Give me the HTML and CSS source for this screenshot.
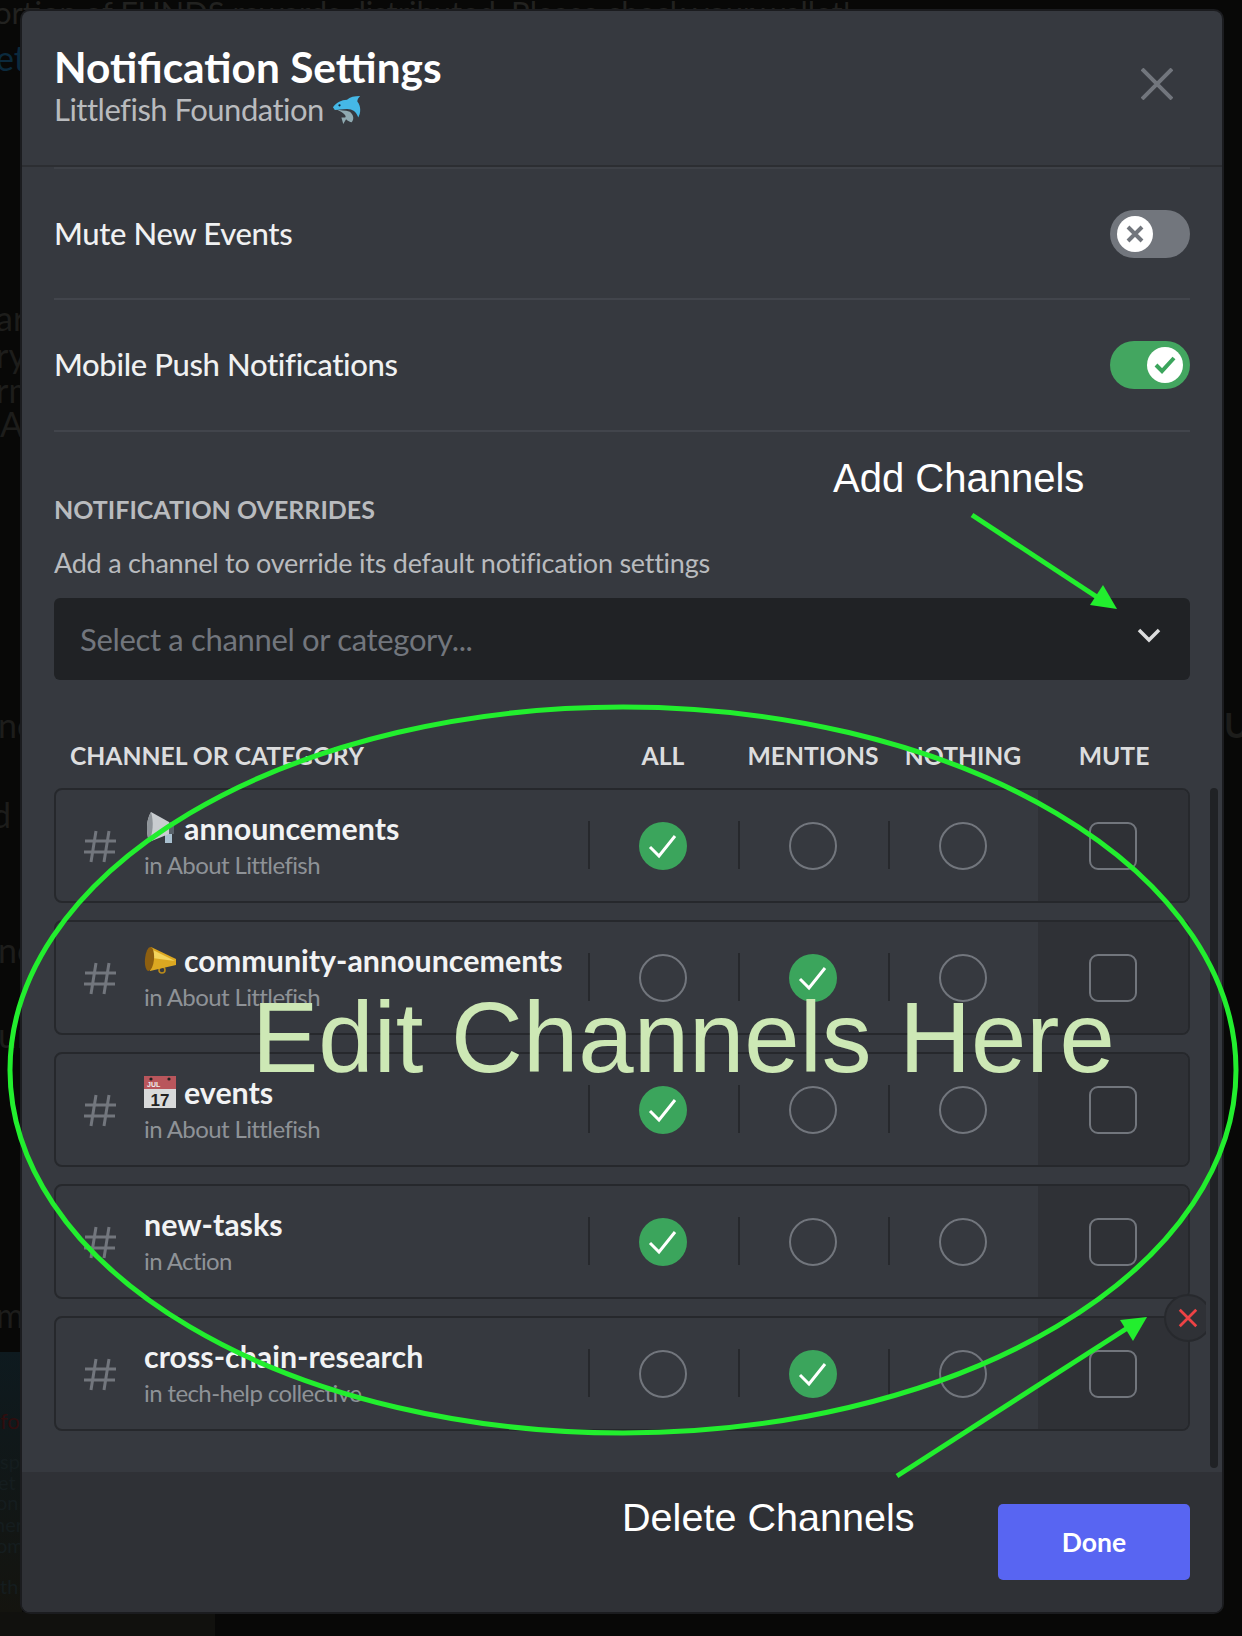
FILE: index.html
```html
<!DOCTYPE html>
<html lang="en">
<head>
  <meta charset="UTF-8">
  <title>Notification Settings</title>
  <link rel="stylesheet" href="styles.css">
</head>
<body>
  <!-- dimmed page behind the modal -->
  <div class="backdrop">
    <div class="bd-photo"></div>
    <div class="bd-foot"></div>
    <span class="ghost g-top">ortion of FUNDS rewards distributed. Please check your wallet!</span>
    <span class="ghost g-blue">et</span>
    <span class="ghost g1">ar</span>
    <span class="ghost g2">ry</span>
    <span class="ghost g3">rm</span>
    <span class="ghost g4">A</span>
    <span class="ghost g5">no</span>
    <span class="ghost g6">d t</span>
    <span class="ghost g7">nc</span>
    <span class="ghost g8">ur</span>
    <span class="ghost g9">m</span>
    <span class="ghost g10">for</span>
    <span class="ghost small g12">sp</span>
    <span class="ghost small g13">et</span>
    <span class="ghost small g14">on</span>
    <span class="ghost small g15">her</span>
    <span class="ghost small g16">om</span>
    <span class="ghost small g17">th</span>
    <span class="ghost g11">UT</span>
  </div>

  <div class="modal">
    <header class="modal-head">
      <div>
        <h1 class="title">Notification Settings</h1>
        <div class="subtitle">Littlefish Foundation
          <svg class="dolphin" viewBox="0 0 32 32">
            <path d="M4 16c5 2 10 1 15 3 4 3 5 8 2 11-2 0-4-1-6-3l-3 5-2-7 4 0c2-1-1-5-10-9z" fill="#8fa9b0"/>
            <path d="M1 14C5 9 10 6 16 6 19 3 24 2 30 2 28 4 27 6 27 8 31 13 31 20 28 25 26 19 22 16 16 16 11 16 6 17 3 17z" fill="#45b8e6"/>
            <circle cx="8" cy="12" r="1.2" fill="#123"/>
          </svg>
        </div>
      </div>
      <svg class="close" viewBox="0 0 32 32"><path d="M1 1l30 30M31 1L1 31"/></svg>
    </header>

    <div class="modal-body">
      <div class="settings">
        <div class="setting">
          <span>Mute New Events</span>
          <div class="toggle">
            <div class="knob">
              <svg viewBox="0 0 36 36"><path class="x-mark" d="M11 11l14 14M25 11L11 25"/></svg>
            </div>
          </div>
        </div>
        <div class="setting">
          <span>Mobile Push Notifications</span>
          <div class="toggle on">
            <div class="knob">
              <svg viewBox="0 0 36 36"><path class="tick-mark" d="M9 18l6 6 12-13"/></svg>
            </div>
          </div>
        </div>
      </div>

      <div class="overrides">
        <h2 class="section-title">NOTIFICATION OVERRIDES</h2>
        <p class="section-desc">Add a channel to override its default notification settings</p>
        <div class="select">
          <span>Select a channel or category...</span>
          <svg viewBox="0 0 24 24"><path d="M2 6l10 10L22 6"/></svg>
        </div>
      </div>

      <div class="table-head">
        <span class="col-name">CHANNEL OR CATEGORY</span>
        <span>ALL</span>
        <span>MENTIONS</span>
        <span>NOTHING</span>
        <span>MUTE</span>
      </div>

      <div class="list-wrap">
        <div class="list">
          <div class="row">
            <svg class="hash" viewBox="0 0 33 33"><path d="M12 1L7 32M25 1L20 32M1 11h31M0 22h31"/></svg>
            <div class="channel">
              <div class="name">
                <svg class="emoji" viewBox="0 0 32 32">
                  <path d="M21 20h7v11h-7z" fill="#a9c0cf"/>
                  <path d="M24 10h6v12h-6z" fill="#59626a"/>
                  <path d="M7 0C2 8 2 20 5 30l20-8V10z" fill="#c9cdd0"/>
                  <path d="M7 0C2 8 2 20 5 30c4-9 5-20 2-30z" fill="#8e9499"/>
                </svg>
                announcements
              </div>
              <div class="sub">in About Littlefish</div>
            </div>
            <div class="opt"><span class="radio sel"><svg viewBox="0 0 48 48"><path d="M11 25l9 9 16-20"/></svg></span></div>
            <div class="opt"><span class="radio"></span></div>
            <div class="opt"><span class="radio"></span></div>
            <div class="opt mute"><span class="box"></span></div>
          </div>

          <div class="row">
            <svg class="hash" viewBox="0 0 33 33"><path d="M12 1L7 32M25 1L20 32M1 11h31M0 22h31"/></svg>
            <div class="channel">
              <div class="name">
                <svg class="emoji" viewBox="0 0 32 32">
                  <circle cx="18" cy="26" r="3" fill="none" stroke="#b98a1a" stroke-width="1.6"/>
                  <path d="M7 3l25 12v6L6 27z" fill="#dca821"/>
                  <path d="M9 6l22 11-23-3z" fill="#f3d45c"/>
                  <ellipse cx="5.5" cy="15" rx="4.5" ry="12" transform="rotate(5 5 15)" fill="#8d5f10"/>
                </svg>
                community-announcements
              </div>
              <div class="sub">in About Littlefish</div>
            </div>
            <div class="opt"><span class="radio"></span></div>
            <div class="opt"><span class="radio sel"><svg viewBox="0 0 48 48"><path d="M11 25l9 9 16-20"/></svg></span></div>
            <div class="opt"><span class="radio"></span></div>
            <div class="opt mute"><span class="box"></span></div>
          </div>

          <div class="row">
            <svg class="hash" viewBox="0 0 33 33"><path d="M12 1L7 32M25 1L20 32M1 11h31M0 22h31"/></svg>
            <div class="channel">
              <div class="name">
                <svg class="emoji" viewBox="0 0 32 32">
                  <rect width="32" height="32" fill="#d9dadb"/>
                  <rect width="32" height="13" fill="#b9565c"/>
                  <circle cx="7" cy="3" r="1.6" fill="#222"/>
                  <circle cx="25" cy="3" r="1.6" fill="#222"/>
                  <text x="3" y="11" class="cal-month">JUL</text>
                  <text x="16" y="30" text-anchor="middle" class="cal-day">17</text>
                </svg>
                events
              </div>
              <div class="sub">in About Littlefish</div>
            </div>
            <div class="opt"><span class="radio sel"><svg viewBox="0 0 48 48"><path d="M11 25l9 9 16-20"/></svg></span></div>
            <div class="opt"><span class="radio"></span></div>
            <div class="opt"><span class="radio"></span></div>
            <div class="opt mute"><span class="box"></span></div>
          </div>

          <div class="row">
            <svg class="hash" viewBox="0 0 33 33"><path d="M12 1L7 32M25 1L20 32M1 11h31M0 22h31"/></svg>
            <div class="channel">
              <div class="name">new-tasks</div>
              <div class="sub">in Action</div>
            </div>
            <div class="opt"><span class="radio sel"><svg viewBox="0 0 48 48"><path d="M11 25l9 9 16-20"/></svg></span></div>
            <div class="opt"><span class="radio"></span></div>
            <div class="opt"><span class="radio"></span></div>
            <div class="opt mute"><span class="box"></span></div>
          </div>

          <div class="row">
            <svg class="hash" viewBox="0 0 33 33"><path d="M12 1L7 32M25 1L20 32M1 11h31M0 22h31"/></svg>
            <div class="channel">
              <div class="name">cross-chain-research</div>
              <div class="sub">in tech-help collective</div>
            </div>
            <div class="opt"><span class="radio"></span></div>
            <div class="opt"><span class="radio sel"><svg viewBox="0 0 48 48"><path d="M11 25l9 9 16-20"/></svg></span></div>
            <div class="opt"><span class="radio"></span></div>
            <div class="opt mute"><span class="box"></span></div>
            <div class="delete"><svg viewBox="0 0 24 24"><path d="M3 3l18 18M21 3L3 21"/></svg></div>
          </div>
        </div>
        <div class="scrollbar"></div>
      </div>
    </div>

    <footer class="modal-foot">
      <button class="done">Done</button>
    </footer>
  </div>

  <!-- hand drawn notes on top of the screenshot -->
  <svg class="marks" viewBox="0 0 1242 1636">
    <ellipse cx="623" cy="1070" rx="613" ry="363"/>
    <path d="M972 515l128 84"/>
    <path class="head" d="M1117 609l-27-4 13-20z"/>
    <path d="M897 1476l232-149"/>
    <path class="head" d="M1147 1317l-27 3 13 21z"/>
  </svg>
  <div class="note note-add">Add Channels</div>
  <div class="note note-del">Delete Channels</div>
  <div class="note note-edit">Edit Channels Here</div>
</body>
</html>
```

FILE: styles.css
```css
* {
  box-sizing: border-box;
}
body {
  margin: 0;
  width: 1242px;
  height: 1636px;
  position: relative;
  overflow: hidden;
  background-color: #080807;
  font-family: Lato, "Open Sans", sans-serif;
  color: #dcddde;
}

/* page behind the modal */
.backdrop {
  position: absolute;
  inset: 0;
  overflow: hidden;
}
.bd-photo {
  position: absolute;
  left: 0;
  top: 1352px;
  width: 22px;
  height: 260px;
  background: linear-gradient(#0e1a1f, #14140f);
}
.bd-foot {
  position: absolute;
  left: 0;
  top: 1612px;
  width: 215px;
  height: 24px;
  background: #11110e;
}
.ghost {
  position: absolute;
  font-size: 34px;
  line-height: 30px;
  white-space: nowrap;
  color: #1d1d1b;
}
.ghost.small {
  font-size: 20px;
  line-height: 18px;
  color: #151d1f;
}
.g-top { left: -6px; top: -3px; font-size: 31px; color: #222220; }
.g-blue { left: -4px; top: 43px; color: #0b2a3d; }
.g1 { left: -4px; top: 303px; }
.g2 { left: -4px; top: 340px; }
.g3 { left: -4px; top: 375px; }
.g4 { left: 0; top: 409px; }
.g5 { left: -2px; top: 710px; }
.g6 { left: -8px; top: 800px; }
.g7 { left: -2px; top: 935px; }
.g8 { left: -2px; top: 1020px; }
.g9 { left: -4px; top: 1300px; }
.g10 { left: 0; top: 1408px; font-size: 22px; line-height: 26px; color: #300d0e; }
.g11 { left: 1224px; top: 710px; font-weight: 700; }
.g12 { left: 0; top: 1452px; }
.g13 { left: -2px; top: 1473px; }
.g14 { left: -4px; top: 1493px; }
.g15 { left: -6px; top: 1515px; }
.g16 { left: -4px; top: 1536px; }
.g17 { left: 0; top: 1577px; }

/* modal */
.modal {
  position: absolute;
  left: 22px;
  top: 11px;
  width: 1200px;
  height: 1601px;
  display: flex;
  flex-direction: column;
  background-color: #36393f;
  border-radius: 8px;
  box-shadow: 0 0 0 2px #1b1c1f;
}
.modal-head {
  height: 156px;
  flex: none;
  display: flex;
  justify-content: space-between;
  padding: 33px 49px 0 32px;
  border-bottom: 2px solid #2c2e32;
}
.title {
  margin: 0;
  font-size: 42.4px;
  line-height: 46px;
  font-weight: 700;
  color: #fff;
}
.subtitle {
  display: flex;
  align-items: center;
  gap: 8px;
  font-size: 31px;
  line-height: 38px;
  letter-spacing: -0.5px;
  color: #b9bbbe;
}
.dolphin {
  width: 30px;
  height: 30px;
}
.close {
  width: 32px;
  height: 32px;
  margin-top: 24px;
}
.close path {
  fill: none;
  stroke: #72767d;
  stroke-width: 4;
}

.modal-body {
  flex: 1;
  padding: 0 4px 0 32px;
}
.settings {
  margin-right: 28px;
  border-top: 2px solid #3e4147;
}
.setting {
  height: 132px;
  display: flex;
  align-items: center;
  justify-content: space-between;
  border-bottom: 2px solid #42454c;
  font-size: 31px;
  font-weight: 500;
  letter-spacing: -0.35px;
  color: #f0f1f2;
}
.setting span {
  margin-top: -2px;
}
.setting:first-child {
  height: 131px;
}
.toggle {
  width: 80px;
  height: 48px;
  padding: 6px 7px;
  border-radius: 24px;
  background-color: #72767d;
}
.toggle.on {
  display: flex;
  justify-content: flex-end;
  background-color: #43a660;
}
.knob {
  width: 36px;
  height: 36px;
  border-radius: 50%;
  background-color: #fff;
}
.knob svg {
  display: block;
}
.knob path {
  fill: none;
  stroke-width: 4;
}
.x-mark {
  stroke: #72767d;
}
.tick-mark {
  stroke: #3ba55c;
}

.overrides {
  margin-right: 28px;
  padding-top: 61px;
}
.section-title {
  margin: 0;
  font-size: 25px;
  line-height: 32px;
  font-weight: 700;
  color: #b9bbbe;
}
.section-desc {
  margin: 22px 0 0;
  font-size: 27px;
  line-height: 32px;
  letter-spacing: -0.25px;
  color: #b9bbbe;
}
.select {
  height: 82px;
  margin-top: 19px;
  padding: 0 29px 0 26px;
  display: flex;
  align-items: center;
  justify-content: space-between;
  background-color: #202225;
  border-radius: 6px;
  font-size: 31px;
  letter-spacing: -0.33px;
  color: #72767d;
}
.select svg {
  width: 24px;
  height: 24px;
  margin-top: -6px;
}
.select path {
  fill: none;
  stroke: #dcddde;
  stroke-width: 3.5;
}

.table-head {
  height: 108px;
  padding-top: 42px;
  margin-right: 28px;
  display: grid;
  grid-template-columns: 1fr 150px 150px 150px 152px;
  align-items: center;
  text-align: center;
  font-size: 24.7px;
  font-weight: 700;
  color: #dcddde;
}
.col-name {
  padding-left: 16px;
  text-align: left;
}

.list-wrap {
  display: flex;
  gap: 4px;
  height: 680px;
}
.list {
  width: 1152px;
  padding-right: 16px;
  overflow: hidden;
  display: flex;
  flex-direction: column;
  gap: 17px;
}
.scrollbar {
  width: 8px;
  background-color: #202225;
  border-radius: 4px;
}
.row {
  position: relative;
  height: 115px;
  flex: none;
  display: grid;
  grid-template-columns: 88px 1fr 150px 150px 150px 150px;
  align-items: stretch;
  border: 2px solid #26282c;
  border-radius: 8px;
}
.hash {
  width: 33px;
  height: 33px;
  margin: 40px 0 0 28px;
}
.hash path {
  fill: none;
  stroke: #72767d;
  stroke-width: 3;
}
.channel {
  padding-top: 17px;
  min-width: 0;
}
.name {
  display: flex;
  align-items: center;
  gap: 8px;
  height: 42px;
  font-size: 30.4px;
  font-weight: 700;
  color: #f2f3f4;
  white-space: nowrap;
}
.emoji {
  width: 32px;
  height: 32px;
  flex: none;
  margin-top: -1px;
}
.cal-month {
  font-size: 7px;
  fill: #eee;
  font-family: "Liberation Sans", sans-serif;
}
.cal-day {
  font-size: 17px;
  fill: #222;
  font-family: "Liberation Sans", sans-serif;
}
.sub {
  margin-top: 1px;
  font-size: 24px;
  line-height: 30px;
  letter-spacing: -0.6px;
  color: #8e9297;
  white-space: nowrap;
}
.opt {
  position: relative;
  display: flex;
  align-items: center;
  justify-content: center;
}
.opt::before {
  content: "";
  position: absolute;
  left: 0;
  top: 31px;
  width: 2px;
  height: 48px;
  background-color: #26282c;
}
.opt.mute {
  background-color: #2f3136;
  border-radius: 0 6px 6px 0;
}
.opt.mute::before {
  display: none;
}
.radio {
  width: 48px;
  height: 48px;
  border: 2px solid #72767d;
  border-radius: 50%;
}
.radio.sel {
  border: 0;
  background-color: #3ba55c;
}
.radio svg {
  display: block;
}
.radio path {
  fill: none;
  stroke: #fff;
  stroke-width: 3;
}
.box {
  width: 48px;
  height: 48px;
  border: 2px solid #72767d;
  border-radius: 9px;
}
.delete {
  position: absolute;
  right: -24px;
  top: -24px;
  width: 48px;
  height: 48px;
  display: flex;
  align-items: center;
  justify-content: center;
  background-color: #2f3136;
  border: 2px solid #27292d;
  border-radius: 50%;
}
.delete svg {
  width: 22px;
  height: 22px;
}
.delete path {
  fill: none;
  stroke: #ed4245;
  stroke-width: 3;
}

.modal-foot {
  height: 140px;
  flex: none;
  padding: 32px 32px 0 0;
  display: flex;
  justify-content: flex-end;
  align-items: flex-start;
  background-color: #2f3136;
  border-radius: 0 0 8px 8px;
}
.done {
  width: 192px;
  height: 76px;
  border: 0;
  border-radius: 5px;
  background-color: #5865f2;
  color: #fff;
  font-family: Lato, "Open Sans", sans-serif;
  font-size: 26.5px;
  font-weight: 700;
}

/* annotations */
.marks {
  position: absolute;
  left: 0;
  top: 0;
  width: 1242px;
  height: 1636px;
  pointer-events: none;
}
.marks ellipse,
.marks path {
  fill: none;
  stroke: #22ee2e;
  stroke-width: 5;
}
.marks path.head {
  fill: #22ee2e;
  stroke: none;
}
.note {
  position: absolute;
  font-family: "Liberation Sans", Arial, sans-serif;
  color: #fff;
  white-space: nowrap;
}
.note-add {
  left: 833px;
  top: 455px;
  font-size: 40px;
  line-height: 46px;
}
.note-del {
  left: 622px;
  top: 1494px;
  font-size: 39.6px;
  line-height: 46px;
}
.note-edit {
  left: 252px;
  top: 980px;
  font-size: 99.5px;
  line-height: 116px;
  color: #cde8b5;
}
```
